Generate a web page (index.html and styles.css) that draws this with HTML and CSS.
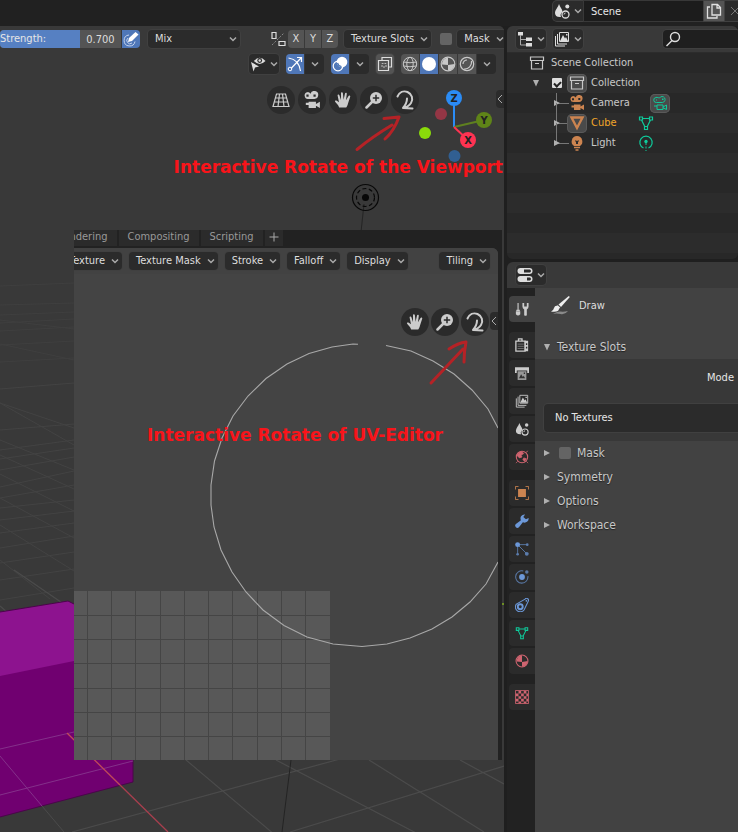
FILE: index.html
```html
<!DOCTYPE html>
<html lang="en">
<head>
<meta charset="utf-8">
<title>Scene editor</title>
<link rel="stylesheet" href="styles.css">
</head>
<body>
<svg class="defs" aria-hidden="true">
  <symbol id="chev" viewBox="0 0 8 8"><path d="M1 2.500 4 5.500 7 2.500" fill="none" stroke="currentColor" stroke-width="1.500"/></symbol>
  <symbol id="hand" viewBox="0 0 18 18"><path d="M5.2 16.5C4.2 14 2 12 1 10.6c-.4-1 .8-1.600 1.800-.9L5 11.300 3.600 4.600c-.2-1.300 1.400-1.600 1.800-.4L7 9 7 2.200c0-1.300 1.800-1.300 1.900 0L9.600 8.800 11 2.400c.3-1.200 2-.9 1.800.4L12 9.300 14.500 5c.6-1.100 2.100-.4 1.700.8L14 12.500c-.4 1.800-1 3-1.800 4Z" fill="currentColor"/></symbol>
  <symbol id="zoomin" viewBox="0 0 18 18"><circle cx="11" cy="7" r="6" fill="currentColor"/><path d="M7 11 1.500 16.500" stroke="currentColor" stroke-width="2.500" stroke-linecap="round"/><path d="M11 3.800V10.200M7.800 7H14.200" stroke="#2b2b2b" stroke-width="1.500"/></symbol>
  <symbol id="rotate" viewBox="0 0 20 22"><path d="M2.500 7.500C4.500 3 8.500 1.500 12.500 3 17 5 18.500 10 16 14 14.500 16.500 12 18 8.500 18.800M12 9.500C12 13 10.500 16 8 19L17.500 19.500" fill="none" stroke="currentColor" stroke-width="2" stroke-linecap="round" stroke-linejoin="round"/></symbol>
  <symbol id="camera" viewBox="0 0 16 16"><path d="M4 1a3 3 0 1 0 1 6h5a3.500 3.500 0 1 0-3.300-4.500A3 3 0 0 0 4 1ZM3 3.200h2v2H3zM9.300 3h2v2h-2z" fill="currentColor" fill-rule="evenodd"/><path d="M5 9.500h6.500v2L15 9.500V15l-3.500-2V15H5v-2.500H2.500v-2H5z" fill="currentColor"/></symbol>
  <symbol id="cameraline" viewBox="0 0 16 16"><g fill="none" stroke="currentColor"><path d="M4 2.500a2.300 2.300 0 1 0 .5 5h6a3 3 0 1 0-3-4.500C6.500 3 5.500 2 4 2.500ZM5 10h6v4.500H5zM11 12l3.500-2v4.500L11 12.800M2 11h3"/></g><path d="M4 4.500h1v1H4zM10 3.500h1.500V5H10z" fill="currentColor"/></symbol>
  <symbol id="box" viewBox="0 0 16 16"><path d="M1.500 2h13v3.500h-13zM2.500 5.500h11V14h-11zM6 8.500h4" fill="none" stroke="currentColor" stroke-width="1.200"/></symbol>
  <symbol id="mesh" viewBox="0 0 16 16"><path d="M4.500 3.500h7M3.500 5 7 12M12.500 5 9 12M1.500 2h3v3h-3zM11.500 2h3v3h-3zM6.500 11.500h3v3h-3z" fill="none" stroke="currentColor" stroke-width="1.200"/></symbol>
  <symbol id="scene" viewBox="0 0 16 16"><path d="M5 1C6 4 8.500 6.500 8.500 9A4 4 0 0 0 7 14C3 14.500 1 12.500 1 10 1 7 4 4.500 5 1Z" fill="currentColor"/><circle cx="13.300" cy="3.500" r="2" fill="currentColor"/><circle cx="11.500" cy="11.500" r="3.500" fill="none" stroke="currentColor" stroke-width="1.300"/><path d="M10 11.500q0-1.500 1.500-1.500" fill="none" stroke="currentColor"/></symbol>
  <symbol id="layers" viewBox="0 0 16 16"><path d="M1.500 5v10H11M3.500 3v10H13M5.500 1.500h9v9h-9z" fill="none" stroke="currentColor"/><path d="M6 10 9 4l2 3.500 1-1.500 2 4zM12 3h1.500v1.500H12z" fill="currentColor"/></symbol>
  <symbol id="tri" viewBox="0 0 8 8"><path d="M1 1 7 4 1 7Z" fill="currentColor"/></symbol>
  <symbol id="tridown" viewBox="0 0 8 8"><path d="M1 1H7L4 7.500Z" fill="currentColor"/></symbol>
  <symbol id="matball" viewBox="0 0 16 16"><circle cx="8" cy="8" r="6.800" fill="none" stroke="currentColor" stroke-width="1.200"/><path d="M8 1.500V9L2 8.500A6.500 6.500 0 0 1 8 1.500Z" fill="currentColor"/><path d="M8 9 14.500 8A6.500 6.500 0 0 1 8 14.500Z" fill="currentColor"/></symbol>
</svg>

<header class="topbar">
  <button class="btn scene-type" aria-label="Browse scene"><svg class="ic"><use href="#scene"/></svg><svg class="chev"><use href="#chev"/></svg></button>
  <input class="scene-name" type="text" value="Scene" aria-label="Scene name">
  <button class="btn lit new-scene" aria-label="New scene"><svg class="ic" viewBox="0 0 16 16"><path d="M6 1.500h5.500l3 3V12H6zM11 1.500V5h3.500M4 4H1.500v11H11v-2" fill="none" stroke="#e0e0e0" stroke-width="1.300"/></svg></button>
  <button class="btn del-scene" aria-label="Delete scene"><svg class="ic" viewBox="0 0 16 16"><path d="M4 4 12 12M12 4 4 12" stroke="#777"/></svg></button>
</header>

<div class="workspace">
<main class="viewport">
  <svg class="scene" viewBox="0 26 504 806" preserveAspectRatio="xMinYMin slice" aria-hidden="true">
    <g stroke="#434343" fill="none">
      <path stroke="#3f3f3f" d="M0 286 74 283M0 305 74 303M0 315 74 312M0 323 74 319M0 331 74 327M0 345 74 341M0 362 74 358M0 320 74 329M0 344 74 360"/>
      <path d="M0 389 74 383M0 430 74 424M0 403 74 428M0 450 74 440M0 459 74 448M0 470 74 457M0 487 74 471M0 498 74 485M0 403 74 445M0 440 74 470M0 455 74 489M0 474 74 511M0 498 74 538M0 508 74 500M0 520 74 511M0 533 74 523M0 548 74 536M0 563 74 552M0 580 74 569M0 600 74 588M0 525 74 571M0 560 50 599"/>
      <path stroke="#4b4b4b" stroke-width="1.200" d="M14 570 74 611M0 606 8 613M72 832 340 759M290 832 504 766M186 760 275 835M276 760 420 835M369 760 484 832M460 760 504 784"/>
    </g>
    <path d="M0 612 68 601 74 604 133 688 133 782 0 817Z" fill="#700070"/>
    <path d="M0 612 68 601 74 604V661L0 676Z" fill="#8d138f"/>
    <path d="M0 612 68 601 74 604M133 760 133 782 0 817" fill="none" stroke="#4a064a"/>
    <path d="M0 749 74 732M0 795 133 761M0 756 42 806" fill="none" stroke="#84308a"/>
    <path d="M42 806 64 832" stroke="#4b4b4b"/>
    <path d="M67 733 120 785" stroke="#c04a58" stroke-width="1.300"/>
    <path d="M120 785 168 832" stroke="#a83f4e" stroke-width="1.300"/>
    <path d="M364 204 361 232M291 760 282 832" stroke="#242424"/>
    <path d="M502 604h2" stroke="#6d8f25" stroke-width="2"/>
    <g fill="none" stroke="#080808" stroke-width="1.200"><circle cx="365.500" cy="197.500" r="13"/><circle cx="365.500" cy="197.500" r="9" stroke-dasharray="4 2.500"/></g>
    <circle cx="365.500" cy="197.500" r="3.500" fill="#080808"/>
  </svg>

  <div class="bar tool-row">
    <div class="join">
      <label class="strength"><span>Strength:</span><input type="text" value="0.700"></label>
      <button class="btn on" aria-label="Use pressure"><svg class="ic" viewBox="0 0 16 16"><path d="M5 11 6 7 12.500 1l3 2.500L9 10Z" fill="#fff"/><path d="M6 4A5.500 5.500 0 1 0 12 10.500M5 7A3 3 0 1 0 9 12" fill="none" stroke="#c5d3ec"/></svg></button>
    </div>
    <div class="select"><select aria-label="Blend mode"><option>Mix</option></select><svg class="chev"><use href="#chev"/></svg></div>
    <svg class="ic mirror" viewBox="0 0 16 16" aria-label="Mirror"><path d="M2 1.500h4v6H2zM9 10.500h6v4H9z" fill="none" stroke="#ddd" stroke-width="1.200"/><path d="M2 14 14 2" stroke="#888" stroke-dasharray="2 1.500"/></svg>
    <div class="join axes"><button class="btn lit">X</button><button class="btn lit">Y</button><button class="btn lit">Z</button></div>
    <button class="btn menu">Texture Slots<svg class="chev"><use href="#chev"/></svg></button>
    <input type="checkbox" class="check mask-check" aria-label="Use mask">
    <button class="btn menu">Mask<svg class="chev"><use href="#chev"/></svg></button>
  </div>

  <div class="bar shade-row">
    <button class="btn pair" aria-label="Object visibility"><svg class="ic" viewBox="0 0 16 16"><path d="M4 5Q9.500-1.500 15.500 5 9.500 11 4 5Z" fill="#ddd"/><circle cx="9.700" cy="4.500" r="2.400" fill="#2b2b2b"/><circle cx="9.700" cy="4.500" r="1.200" fill="#ddd"/><path d="M1 6 9 10.500 5 11.500 3.500 15.500Z" fill="#ddd"/></svg><svg class="chev"><use href="#chev"/></svg></button>
    <div class="join"><button class="btn on" aria-label="Gizmos"><svg class="ic" viewBox="0 0 16 16"><path d="M1.500 2Q12 3.500 13.500 15M4 12.500 14 2M10 1.500h4.500V6" fill="none" stroke="#fff" stroke-width="1.200"/><circle cx="3" cy="13" r="1.800" fill="none" stroke="#fff"/></svg></button><button class="btn sq" aria-label="Gizmo options"><svg class="chev"><use href="#chev"/></svg></button></div>
    <div class="join"><button class="btn on" aria-label="Overlays"><svg class="ic" viewBox="0 0 16 16"><circle cx="10" cy="6" r="5.300" fill="#fff"/><circle cx="6" cy="10" r="4.800" fill="none" stroke="#fff" stroke-width="1.200"/><path d="M5.500 7A4.500 4.500 0 0 0 9.500 10.500" fill="none" stroke="#4772b3" stroke-width="1.200"/></svg></button><button class="btn sq" aria-label="Overlay options"><svg class="chev"><use href="#chev"/></svg></button></div>
    <button class="btn lit xray" aria-label="X-ray"><svg class="ic" viewBox="0 0 16 16"><path d="M5 4.500V1.500H14.500V11H12M1.500 4.500H11.500V14.500H1.500Z" fill="none" stroke="#ddd" stroke-width="1.200"/><path d="M5 11V7.500H9V11Z" fill="none" stroke="#bbb" stroke-dasharray="2 1"/></svg></button>
    <div class="join shading">
      <button class="btn lit" aria-label="Wireframe"><svg class="ic" viewBox="0 0 16 16"><g fill="none" stroke="#c8c8c8"><circle cx="8" cy="8" r="6.700"/><ellipse cx="8" cy="8" rx="3.200" ry="6.700"/><path d="M1.500 6Q8 7.500 14.500 6M1.500 10Q8 11.500 14.500 10"/></g></svg></button>
      <button class="btn on" aria-label="Solid"><svg class="ic" viewBox="0 0 16 16"><circle cx="8" cy="8" r="7" fill="#fff"/></svg></button>
      <button class="btn lit" aria-label="Material preview"><svg class="ic soft"><use href="#matball"/></svg></button>
      <button class="btn lit" aria-label="Rendered"><svg class="ic" viewBox="0 0 16 16"><g fill="none" stroke="#c8c8c8" stroke-width="1.200"><circle cx="8" cy="8" r="6.700"/><path d="M4 8A4 4 0 0 1 8 4M12.500 5A7 7 0 0 1 5 13"/></g></svg></button>
      <button class="btn sq" aria-label="Shading options"><svg class="chev"><use href="#chev"/></svg></button>
    </div>
  </div>

  <div class="gizmos">
    <button class="round" aria-label="Switch projection"><svg viewBox="0 0 18 18"><path d="M4.500 3h9L17 15.500H1ZM3.500 7h11M2.300 11h13.500M7.500 3 6 15.500M10.500 3 12 15.500" fill="none" stroke="currentColor" stroke-width="1.200"/></svg></button>
    <button class="round" aria-label="Camera view"><svg><use href="#camera"/></svg></button>
    <button class="round" aria-label="Move view"><svg><use href="#hand"/></svg></button>
    <button class="round" aria-label="Zoom view"><svg><use href="#zoomin"/></svg></button>
    <button class="round" aria-label="Rotate view"><svg class="big"><use href="#rotate"/></svg></button>
  </div>
  <svg class="axis" viewBox="416 88 80 76" role="img" aria-label="View axes">
    <circle cx="441" cy="114" r="6" fill="#943645"/><circle cx="454.500" cy="156" r="6" fill="#315f92"/>
    <g fill="none" stroke-width="2"><path d="M454 127V98" stroke="#2b8cf5"/><path d="M454 127 484 120" stroke="#5f8020"/><path d="M454 127 468 140" stroke="#ff3352"/></g>
    <circle cx="425" cy="133" r="6" fill="#8adb0a"/><circle cx="454" cy="98" r="8" fill="#2b8cf5"/><circle cx="484" cy="120" r="8" fill="#5f8418"/><circle cx="468" cy="140" r="8" fill="#ff3352"/>
    <g class="axis-text"><text x="454" y="102">Z</text><text x="484" y="124">Y</text><text x="468" y="144">X</text></g>
  </svg>
  <button class="region-tab main-tab" aria-label="Show sidebar"><svg viewBox="0 0 6 10"><path d="M5 1 1 5 5 9" fill="none" stroke="#aaa"/></svg></button>

  <section class="editor" aria-label="UV editor">
    <nav class="tabs"><a href="#r">Rendering</a><a href="#c">Compositing</a><a href="#s">Scripting</a><button aria-label="Add workspace"><svg viewBox="0 0 10 10"><path d="M5 .5V9.500M.5 5H9.500" stroke="#aaa"/></svg></button></nav>
    <div class="editor-main">
      <div class="bar editor-row">
        <button class="btn menu first">Texture<svg class="chev"><use href="#chev"/></svg></button>
        <button class="btn menu">Texture Mask<svg class="chev"><use href="#chev"/></svg></button>
        <button class="btn menu">Stroke<svg class="chev"><use href="#chev"/></svg></button>
        <button class="btn menu">Falloff<svg class="chev"><use href="#chev"/></svg></button>
        <button class="btn menu">Display<svg class="chev"><use href="#chev"/></svg></button>
        <button class="btn menu tiling">Tiling<svg class="chev"><use href="#chev"/></svg></button>
      </div>
      <div class="uv">
        <svg class="uv-art" viewBox="74 274 424 486" preserveAspectRatio="xMinYMin slice" aria-hidden="true">
          <path d="M74 591H330V760H74Z" fill="#585858"/>
          <path d="M87.500 591V760M111.500 591V760M135.500 591V760M160.500 591V760M184.500 591V760M208.500 591V760M232.500 591V760M257.500 591V760M281.500 591V760M305.500 591V760M74 615.500H330M74 639.500H330M74 663.500H330M74 688.500H330M74 712.500H330M74 736.500H330" stroke="#454545"/>
          <path d="M358 344.300 353 344 332 347 309 353.500 287 364 266 378.500 248 396 233 416 222 438 214.500 461 211 485 211 505 214 527 221 550 232 572 246 592 263 610 284 625.500 307 637 333 644 362 646.500 387 644 410 638 432 629 452 617 470 602 486 584 498 562M386 345.500 411 351 433 361 454 374 472 390 488 409 498 428" fill="none" stroke="#a8a8a8" stroke-width="1.100"/>
        </svg>
        <div class="uv-gizmos">
          <button class="round" aria-label="Pan"><svg><use href="#hand"/></svg></button>
          <button class="round" aria-label="Zoom"><svg><use href="#zoomin"/></svg></button>
          <button class="round" aria-label="Rotate"><svg class="big"><use href="#rotate"/></svg></button>
        </div>
        <button class="region-tab uv-tab" aria-label="Show sidebar"><svg viewBox="0 0 6 10"><path d="M5 1 1 5 5 9" fill="none" stroke="#aaa"/></svg></button>
      </div>
    </div>
  </section>

  <svg class="arrows" viewBox="0 26 504 806" preserveAspectRatio="xMinYMin slice" aria-hidden="true"><g fill="none" stroke="#b52226" stroke-width="3" stroke-linecap="round" stroke-linejoin="round"><path d="M357 149.500Q372 137 392 125M384 118.500 399 117Q394 131 385 139"/><path d="M431 383 463 349M449 349Q458 343 466 342Q464 352 464 362"/></g></svg>
  <p class="note note-view">Interactive Rotate of the Viewport</p>
  <p class="note note-uv">Interactive Rotate of UV-Editor</p>
</main>

<aside class="side">
  <section class="outliner">
    <div class="bar side-head">
      <button class="btn pair" aria-label="Editor type"><svg class="ic" viewBox="0 0 16 16"><path d="M1 1h5v3.500H1zM9 6.500h6V10H9zM9 12h6v3.500H9z" fill="#ddd"/><path d="M3.500 4V14H9M3.500 8.500H9" fill="none" stroke="#aaa"/></svg><svg class="chev"><use href="#chev"/></svg></button>
      <button class="btn pair" aria-label="Display mode"><svg class="ic"><use href="#layers"/></svg><svg class="chev"><use href="#chev"/></svg></button>
      <label class="search"><svg class="ic" viewBox="0 0 16 16"><circle cx="10" cy="6" r="4.500" fill="none" stroke="#ddd" stroke-width="1.400"/><path d="M7 9.500 1.500 15" stroke="#ddd" stroke-width="1.400"/></svg><input type="search" aria-label="Filter"></label>
    </div>
    <ul class="tree">
      <li class="root"><svg class="ic"><use href="#box"/></svg><span>Scene Collection</span></li>
      <li class="coll"><svg class="tri"><use href="#tridown"/></svg><input type="checkbox" class="tick" checked aria-label="Collection enabled"><span class="chip"><svg class="ic"><use href="#box"/></svg></span><span>Collection</span></li>
      <li class="obj"><svg class="tri"><use href="#tri"/></svg><span class="chip bare orange"><svg class="ic"><use href="#camera"/></svg></span><span>Camera</span><span class="chip green data"><svg class="ic"><use href="#cameraline"/></svg></span></li>
      <li class="obj active"><svg class="tri"><use href="#tri"/></svg><span class="chip orange"><svg class="ic" viewBox="0 0 16 16"><path d="M2.500 2.500H13.500L8 13Z" fill="none" stroke="currentColor" stroke-width="2.400"/></svg></span><span>Cube</span><span class="chip bare green data"><svg class="ic"><use href="#mesh"/></svg></span></li>
      <li class="obj"><svg class="tri"><use href="#tri"/></svg><span class="chip bare orange"><svg class="ic" viewBox="0 0 16 16"><path d="M8 1a5.500 5.500 0 0 0-3 10h6A5.500 5.500 0 0 0 8 1Z" fill="currentColor"/><path d="M6 6h1.500v3M10 6H8.500v3" stroke="#2b2b2b" fill="none"/><path d="M5 12.500h6M6.500 15h3" stroke="currentColor" stroke-width="1.300"/></svg></span><span>Light</span><span class="chip bare green data"><svg class="ic" viewBox="0 0 16 16"><path d="M5.500 13A6.200 6.200 0 1 1 10.500 13" fill="none" stroke="currentColor" stroke-width="1.200"/><circle cx="8" cy="6.500" r="1.700" fill="currentColor"/><path d="M8 8V16" stroke="currentColor" stroke-dasharray="2 1.500"/></svg></span></li>
    </ul>
  </section>

  <section class="props">
    <div class="bar side-head">
      <button class="btn pair" aria-label="Editor type"><svg class="ic" viewBox="0 0 16 16"><rect x=".5" y="1" width="15" height="6" rx="3" fill="#ddd"/><rect x=".5" y="9" width="15" height="6" rx="3" fill="#ddd"/><path d="M7 2.500h6q2 1.500 0 3H7zM10 10.500h3q2 1.500 0 3h-3z" fill="#2b2b2b"/></svg><svg class="chev"><use href="#chev"/></svg></button>
    </div>
    <div class="props-main">
      <nav class="ptabs">
        <button class="current" aria-label="Tool"><svg class="ic" viewBox="0 0 16 16"><path d="M3.500 1V9M1.500 9.500h4" stroke="currentColor" stroke-width="1.300"/><path d="M1 10.500h5V14q-2.500 3-5 0zM8.500 1v4q0 2 2 3.500V15q1.500 1.500 3 0V8.500q2-1.500 2-3.500V1h-2v4h-3V1z" fill="currentColor"/></svg></button>
        <button class="gap" aria-label="Render"><svg class="ic" viewBox="0 0 16 16"><path d="M1 3.500h10.500V15H1zM4 3V1h4v2" fill="none" stroke="currentColor" stroke-width="1.500"/><path d="M11 3h4v12h-4z" fill="currentColor"/><path d="M3 7h7M3 9.500h7M3 12h7" stroke="#777"/><path d="M12.500 6h1.500v2h-1.500zM12.500 10h1.500v2h-1.500z" fill="#2b2b2b"/></svg></button>
        <button aria-label="Output"><svg class="ic" viewBox="0 0 16 16"><path d="M0 1.500h16V8h-2V5H2v3H0z" fill="currentColor"/><path d="M3 6h10v10H3z" fill="#999"/><path d="M4.500 14 7 9.500l2 3 1-1.500 1.500 3zM10 7.500h1.500V9H10z" fill="#333"/></svg></button>
        <button aria-label="View layer"><svg class="ic"><use href="#layers"/></svg></button>
        <button aria-label="Scene"><svg class="ic"><use href="#scene"/></svg></button>
        <button class="red" aria-label="World"><svg class="ic" viewBox="0 0 16 16"><circle cx="8" cy="8" r="6.500" fill="none" stroke="currentColor" stroke-width="1.200"/><path d="M2 6Q4 2 8 2l2 2-3 2 1 2-3 1zM10 9l3 1-2 3-2-2zM12 3l3-2M1 15l2-2M13 13l2 2" fill="currentColor" stroke="currentColor" stroke-width=".8"/></svg></button>
        <button class="orange gap" aria-label="Object"><svg class="ic" viewBox="0 0 16 16"><path d="M3.500 3.500h9v9h-9z" fill="currentColor"/><path d="M.5 4V.5H4M12 .5h3.500V4M15.500 12v3.500H12M4 15.500H.5V12" fill="none" stroke="currentColor"/></svg></button>
        <button class="blue" aria-label="Modifiers"><svg class="ic" viewBox="0 0 16 16"><path d="M15.500 4.500A4.500 4.500 0 0 1 9 9.300L4.500 15A2.300 2.300 0 0 1 1 11.500L6.800 7A4.500 4.500 0 0 1 11.500.5L9.500 3.300 12.500 6Z" fill="currentColor"/></svg></button>
        <button class="blue" aria-label="Particles"><svg class="ic" viewBox="0 0 16 16"><circle cx="3" cy="3" r="2.800" fill="currentColor"/><g opacity=".75"><path d="M3 3H14M3 3V14M3 3 13 13" stroke="currentColor"/><circle cx="14" cy="3" r="1.500" fill="currentColor"/><circle cx="3" cy="14" r="1.500" fill="currentColor"/><circle cx="13.500" cy="13.500" r="2.200" fill="currentColor"/></g></svg></button>
        <button class="blue" aria-label="Physics"><svg class="ic" viewBox="0 0 16 16"><circle cx="8" cy="8" r="3.300" fill="currentColor"/><g opacity=".7"><circle cx="13.500" cy="2.300" r="2" fill="currentColor"/><path d="M9.500 1.200A7 7 0 1 0 14.700 7" fill="none" stroke="currentColor" stroke-width="1.200"/></g></svg></button>
        <button class="blue" aria-label="Constraints"><svg class="ic" viewBox="0 0 16 16"><circle cx="6" cy="10" r="2.800" fill="none" stroke="currentColor" stroke-width="2.200"/><path d="M1.500 7 11.500 1.300A2.200 2.200 0 0 1 15 4L10.500 13.500A5.500 5.500 0 1 1 1.500 7Z" fill="none" stroke="currentColor" stroke-width="1.200"/><circle cx="13" cy="3.200" r="1" fill="currentColor"/></svg></button>
        <button class="green" aria-label="Object data"><svg class="ic"><use href="#mesh"/></svg></button>
        <button class="red" aria-label="Material"><svg class="ic"><use href="#matball"/></svg></button>
        <button class="red gap" aria-label="Texture"><svg class="ic" viewBox="0 0 16 16"><path d="M.5.5h15v15H.5z" fill="none" stroke="currentColor"/><path d="M4 1h3v3H4zM10 1h3v3h-3zM1 4h3v3H1zM7 4h3v3H7zM13 4h2v3h-2zM4 7h3v3H4zM10 7h3v3h-3zM1 10h3v3H1zM7 10h3v3H7zM13 10h2v3h-2zM4 13h3v2H4zM10 13h3v2h-3z" fill="currentColor"/></svg></button>
      </nav>
      <div class="panels">
        <div class="tool"><svg viewBox="0 0 20 20"><path d="M19.800 1 18.800 0 8.500 8.500 11 11Z" fill="#eee"/><path d="M7.800 9.200 10.300 11.700 9 12.800Q9 16.500 1 15.500 3.500 14.500 4 12 4.800 9.500 7 9.800Z" fill="#eee"/><path d="M3 18q4-3 7.500-2.500 3 .5 7.500-.5-3 4-7.500 3T3 18Z" fill="#8a8a8a"/></svg><span>Draw</span></div>
        <h2><svg class="tri"><use href="#tridown"/></svg>Texture Slots</h2>
        <div class="panel-body"><div class="mode">Mode</div><div class="list">No Textures</div></div>
        <h2><svg class="tri"><use href="#tri"/></svg><label class="mask-label"><input type="checkbox" class="check">Mask</label></h2>
        <h2><svg class="tri"><use href="#tri"/></svg>Symmetry</h2>
        <h2><svg class="tri"><use href="#tri"/></svg>Options</h2>
        <h2><svg class="tri"><use href="#tri"/></svg>Workspace</h2>
      </div>
    </div>
  </section>
</aside>
</div>
</body>
</html>
```
FILE: styles.css
```css
* { box-sizing: border-box; }
body { margin: 0; min-height: 100vh; display: flex; flex-direction: column; overflow: hidden; background: #1f1f1f; color: #ddd; font: 11px/16px "DejaVu Sans Condensed", "DejaVu Sans", sans-serif; }
.defs { position: absolute; width: 0; height: 0; }
button, input, select { font: inherit; color: inherit; border: 0; margin: 0; padding: 0; background: none; }
.ic { width: 16px; height: 16px; flex: none; display: block; }
.chev { width: 8px; height: 8px; flex: none; color: #aaa; }
.tri { width: 8px; height: 8px; flex: none; color: #b0b0b0; }

.btn { height: 20px; display: flex; align-items: center; justify-content: center; gap: 4px; border-radius: 4px; background: #2b2b2b; box-shadow: 0 0 0 1px #404040; flex: none; white-space: nowrap; }
.btn.lit { background: #545454; color: #ddd; }
.btn.on { background: #4f77b8; }
.btn.menu { padding: 0 3px 0 7px; gap: 6px; }
.btn.pair { width: 30px; }
.join { display: flex; gap: 1px; flex: none; }
.join > .btn { border-radius: 0; box-shadow: none; width: 18px; }
.join > .btn.sq { width: 19px; }
.join > :first-child { border-radius: 4px 0 0 4px; }
.join > :last-child { border-radius: 0 4px 4px 0; }
.bar { display: flex; align-items: center; }
.soft { color: #c8c8c8; }

.topbar { height: 26px; background: #212121; display: flex; align-items: center; justify-content: flex-end; padding-bottom: 4px; overflow: hidden; flex: none; }
.topbar .btn { border-radius: 0; }
.topbar .scene-type { width: 30px; border-radius: 4px 0 0 4px; }
.scene-name { width: 120px; height: 20px; padding: 0 7px; background: #1c1c1c; box-shadow: 0 0 0 1px #383838; margin-left: 1px; color: #e6e6e6; }
.new-scene { width: 20px; }
.topbar .del-scene { width: 20px; margin-right: -7px; margin-left: 1px; }

.workspace { flex: 1; display: grid; grid-template-columns: minmax(0, 1fr) 231px; gap: 3px; }
.viewport { position: relative; background: #393939; overflow: hidden; border-radius: 0 5px 0 0; }
.scene, .arrows { position: absolute; inset: 0; width: 100%; height: 100%; }
.arrows { pointer-events: none; }
.tool-row, .shade-row { position: relative; height: 26px; }
.tool-row .btn, .select select, .strength { height: 18px; }
.strength { display: flex; width: 121px; background: #545454; overflow: hidden; }
.strength span { width: 80px; background: #5680c2; color: #e6e6e6; line-height: 18px; }
.strength input { width: 41px; text-align: center; height: 18px; }
.select { position: relative; display: flex; align-items: center; width: 92px; margin: 0 30px 0 8px; flex: none; }
.select select { appearance: none; width: 100%; padding: 0 7px; border-radius: 4px; background: #2b2b2b; box-shadow: 0 0 0 1px #404040; }
.select .chev { position: absolute; right: 3px; }
.mirror { margin-right: 2px; }
.join.axes > .btn { width: 16px; }
.axes { margin-right: 6px; }
.check { appearance: none; width: 12px; height: 12px; border-radius: 2px; background: #646464; flex: none; }
.mask-check { margin: 0 5px 0 9px; }
.shade-row { justify-content: flex-end; padding-right: 8px; gap: 7px; height: 24px; }
.shade-row > .xray { width: 18px; }

.round { width: 28px; height: 28px; border-radius: 50%; background: #2b2b2b; display: grid; place-items: center; color: #ccc; }
.round svg { width: 18px; height: 18px; }
.round svg.big { width: 20px; height: 22px; }
.gizmos { position: relative; display: flex; justify-content: flex-end; gap: 3px; padding: 10px 85px 0 0; }
.axis { position: absolute; right: 8px; top: 62px; width: 80px; height: 76px; }
.axis-text { font: bold 11px "DejaVu Sans Condensed", "DejaVu Sans", sans-serif; text-anchor: middle; fill: #222; }
.region-tab { position: absolute; right: 0; width: 8px; height: 18px; border-radius: 4px 0 0 4px; background: #2b2b2b; display: grid; place-items: center; }
.region-tab svg { width: 6px; height: 10px; }
.main-tab { top: 64px; }
.uv-tab { top: 38px; }

.editor { position: absolute; left: 74px; right: 2px; top: 204px; height: 530px; display: flex; flex-direction: column; background: #222; overflow: hidden; }
.tabs { display: flex; gap: 2px; height: 16px; margin-left: -26px; flex: none; }
.tabs a { padding: 0 9px; line-height: 14px; color: #999; background: #2b2b2b; text-decoration: none; }
.tabs button { width: 18px; background: #2b2b2b; display: grid; place-items: center; }
.tabs svg { width: 10px; height: 10px; margin-top: -3px; }
.editor-main { flex: 1; display: flex; flex-direction: column; margin: 2px 4px 0 0; background: #444; border-radius: 0 6px 0 0; overflow: hidden; }
.editor-row { height: 26px; gap: 7px; padding-right: 8px; flex: none; background: #424242; }
.editor-row .first { margin-left: -12px; }
.editor-row .btn { height: 18px; }
.tiling { margin-left: auto; }
.uv { position: relative; flex: 1; }
.uv-art { position: absolute; inset: 0; width: 100%; height: 100%; }
.uv-gizmos { position: relative; display: flex; justify-content: flex-end; gap: 2px; padding: 34px 9px 0 0; }

.note { position: absolute; margin: 0; color: #f8141a; font: bold 17px/20px "DejaVu Sans", sans-serif; white-space: nowrap; }
.note-view { right: 1px; top: 131px; }
.note-uv { right: 61px; top: 399px; }

.side { display: flex; flex-direction: column; gap: 3px; min-width: 0; overflow: hidden; }
.outliner { height: 233px; background: repeating-linear-gradient(#282828 0 20px, #2c2c2c 20px 40px) 0 27px; border-radius: 6px; overflow: hidden; flex: none; }
.side-head { height: 26px; padding-left: 9px; gap: 7px; background: #393939; }
.side-head .search { flex: 1; margin-left: 73px; height: 18px; display: flex; align-items: center; padding-left: 2px; background: #1f1f1f; border-radius: 4px 0 0 4px; box-shadow: 0 0 0 1px #404040; }
.search input { flex: 1; width: 0; }
.tree { list-style: none; margin: 0; padding: 1px 0 0; color: #c8c8c8; }
.tree li { height: 20px; display: flex; align-items: center; line-height: 20px; }
.tree .root { padding-left: 22px; gap: 6px; }
.tree .coll { padding-left: 25px; gap: 5px; }
.tree .coll .tick { margin-left: 7px; }
.tick { appearance: none; width: 10px; height: 10px; background: #ddd; border-radius: 1px; display: grid; place-items: center; }
.tick:checked::after { content: ""; width: 5px; height: 3px; border: solid #222; border-width: 0 0 2px 2px; transform: rotate(-45deg); }
.chip { width: 20px; height: 19px; border-radius: 5px; background: #4a4a4a; box-shadow: inset 0 0 0 1px #5a5a5a; display: grid; place-items: center; }
.tree .chip + span { margin-left: 4px; }
.coll .chip + span { margin-left: -1px; }
.chip.bare { background: none; box-shadow: none; }
.tree .obj { padding: 0 68px 0 46px; position: relative; }
.tree .obj:nth-child(n+4) { padding-right: 82px; }
.obj::before { content: ""; position: absolute; left: 49px; top: 0; width: 12px; height: 10px; border: solid #777; border-width: 0 0 1px 1px; }
.obj::after { content: ""; position: absolute; left: 49px; top: 10px; width: 1px; height: 10px; background: #777; }
.obj:last-child::after { display: none; }
.obj .tri, .obj .chip { position: relative; }
.obj .tri { margin-right: 6px; }
.obj span + .chip.data { margin-left: auto; }
.active { color: #f0a52a; }
.orange { color: #cc8450; }
.green { color: #0fc99a; }
.red { color: #cf6470; }
.blue { color: #6c98d8; }

.props { flex: 1; display: flex; flex-direction: column; border-radius: 6px 0 0 0; overflow: hidden; }
.props .side-head { flex: none; }
.props-main { flex: 1; display: flex; }
.ptabs { width: 28px; background: #222; padding: 8px 0 0 2px; display: flex; flex-direction: column; gap: 2px; flex: none; }
.ptabs button { height: 26px; background: #2b2b2b; border-radius: 4px 0 0 4px; display: grid; place-items: center; }
.ptabs button:not([class*="red"]):not([class*="blue"]):not([class*="orange"]):not([class*="green"]) { color: #ccc; }
.ptabs .current { background: #424242; }
.ptabs .gap { margin-top: 8px; }
.ptabs svg { width: 14px; height: 14px; }
.panels { flex: 1; min-width: 0; background: #424242; }
.tool { display: flex; align-items: center; gap: 9px; height: 36px; padding-left: 15px; }
.tool svg { width: 20px; height: 20px; }
.panels h2 { margin: 0; height: 24px; display: flex; align-items: center; gap: 6px; padding-left: 8px; font-size: 12px; font-weight: normal; color: #c8c8c8; text-shadow: 0 1px 1px #222; }
.tool + h2 { margin-top: 11px; }
.panel-body { background: #383838; height: 82px; padding-top: 9px; }
.mode { text-align: right; padding-right: 4px; line-height: 20px; color: #e6e6e6; }
.list { margin: 16px 0 0 9px; height: 28px; line-height: 28px; padding-left: 11px; background: #2b2b2b; border-radius: 4px 0 0 4px; box-shadow: 0 0 0 1px #404040; color: #e6e6e6; }
.mask-label { display: flex; align-items: center; gap: 6px; padding-left: 2px; }
```
